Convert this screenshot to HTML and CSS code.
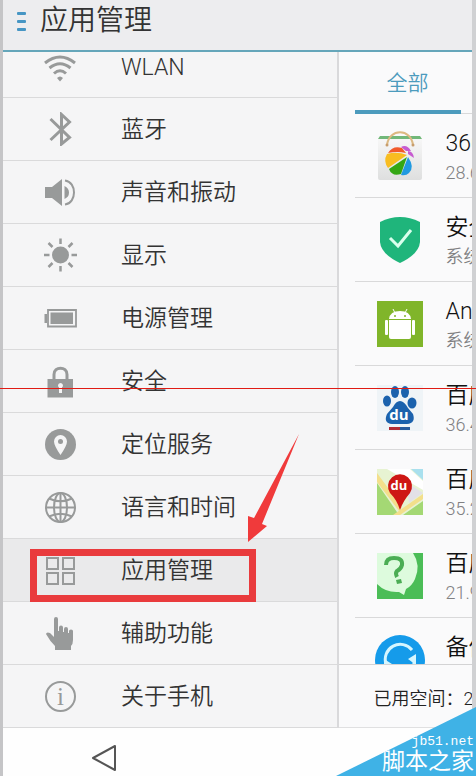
FILE: index.html
```html
<!DOCTYPE html>
<html lang="zh-CN">
<head>
    <meta charset="UTF-8">
    <meta name="viewport" content="width=device-width, initial-scale=1.0">
    <title>应用管理</title>
    <link rel="stylesheet" href="styles.css">
</head>
<body>
    <div class="screen">
        <header class="header">
            <button class="menu-btn" aria-label="菜单"><span></span><span></span><span></span></button>
            <h1>应用管理</h1>
        </header>
        <main class="main">
            <nav class="settings">
                <a class="item" href="#wlan">
                    <svg class="icon line" viewBox="0 0 34 34"><path stroke-width="3" d="M2 12Q17 0 32 12M6.500 17Q17 8.500 27.500 17M11 22.500Q17 17 23 22.500"/><path class="solid" d="M14 27Q17 24 20 27L17 30.500Z"/></svg>
                    <span>WLAN</span>
                </a>
                <a class="item" href="#bluetooth">
                    <svg class="icon line" viewBox="0 0 34 34"><path stroke-width="3" d="M7.500 7L26.500 25.500L18.500 32V2.500L26.500 10L7.500 28"/></svg>
                    <span>蓝牙</span>
                </a>
                <a class="item" href="#sound">
                    <svg class="icon line" viewBox="0 0 34 34"><path class="solid" d="M2 12H9L19 4V31L9 23H2ZM21.500 11Q26 13 26 17.500T21.500 24Z"/><path stroke-width="2" d="M22 5.500C34 7 34 28 22 29.500"/></svg>
                    <span>声音和振动</span>
                </a>
                <a class="item" href="#display">
                    <svg class="icon line" viewBox="0 0 34 34"><circle class="solid" cx="17.500" cy="17" r="8.500"/><path stroke-width="2.500" d="M17.500 .5V6M17.500 28V33.500M1 17H6.500M28.500 17H34M5.500 5L9.500 9M25.500 25L29.500 29M29.500 5L25.500 9M9.500 25L5.500 29"/></svg>
                    <span>显示</span>
                </a>
                <a class="item" href="#power">
                    <svg class="icon line" viewBox="0 0 34 34"><path stroke-width="1.800" d="M5 9H33V25.500H5Z"/><path class="solid" d="M7.500 11.500H30V23H7.500ZM1.500 13H4V22H1.500Z"/></svg>
                    <span>电源管理</span>
                </a>
                <a class="item" href="#security">
                    <svg class="icon line" viewBox="0 0 34 34"><path stroke-width="3" d="M11 16V10.500C11 2 24 2 24 10.500V16"/><path class="solid" d="M4.500 15H30V33.500H4.500Z"/><path class="hole" d="M17.500 19a2.500 2.500 0 0 1 1.500 4.500V29H16V23.500A2.500 2.500 0 0 1 17.500 19Z"/></svg>
                    <span>安全</span>
                </a>
                <a class="item" href="#location">
                    <svg class="icon" viewBox="0 0 34 34"><circle class="solid" cx="17.500" cy="17.500" r="15.500"/><path class="hole" d="M17.500 28Q11 18.500 11 14.500A6.500 6.500 0 0 1 24 14.500Q24 18.500 17.500 28Z"/><circle class="solid" cx="17.500" cy="14.500" r="2.500"/></svg>
                    <span>定位服务</span>
                </a>
                <a class="item" href="#language">
                    <svg class="icon line" viewBox="0 0 34 34"><g stroke-width="2"><circle cx="17.500" cy="17.500" r="14.500"/><ellipse cx="17.500" cy="17.500" rx="6.500" ry="14.500"/><path d="M17.500 3V32M3 17.500H32M6 8.500Q17.500 14 29 8.500M6 26.500Q17.500 21 29 26.500"/></g></svg>
                    <span>语言和时间</span>
                </a>
                <a class="item active" href="#apps" aria-current="page">
                    <svg class="icon line" viewBox="0 0 34 34"><path stroke-width="2" d="M4 5H15V16H4ZM20 5H31V16H20ZM4 20H15V31H4ZM20 20H31V31H20Z"/></svg>
                    <span>应用管理</span>
                    <svg class="arrow" viewBox="0 0 52 110"><path d="M51 1L14 91L19 93L0 109V83L6 85Z"/></svg>
                </a>
                <a class="item" href="#accessibility">
                    <svg class="icon" viewBox="0 0 34 34"><path class="solid" d="M11 21V3Q11 1 13 1T15 3V15H16V11.500Q16 9.500 18 9.500T20 11.500V16H21V13Q21 11 23 11T25 13V17H26V15Q26 13.500 28 13.500T30 15V24Q30 28 28 30V34H12V30L7.500 25L3 18Q3.500 15.500 7 17Z"/></svg>
                    <span>辅助功能</span>
                </a>
                <a class="item" href="#about">
                    <svg class="icon line" viewBox="0 0 34 34"><circle stroke-width="2" cx="17.500" cy="17.500" r="14.500"/><text class="info-i" x="17.500" y="26">i</text></svg>
                    <span>关于手机</span>
                </a>
            </nav>
            <section class="apps">
                <div class="tabs"><button class="tab">全部</button></div>
                <ul class="app-list">
                    <li class="app">
                        <svg class="app-icon" viewBox="0 0 50 50"><defs><linearGradient id="bag" x2="0" y2="1"><stop stop-color="#f8f8f8"/><stop offset="1" stop-color="#dedfdf"/></linearGradient></defs><rect x="3" y="6" width="44" height="43" rx="2" fill="url(#bag)"/><path fill="#72b879" d="M5 5H45L47 8H3Z"/><path fill="none" stroke="#dcb982" stroke-width="2" d="M12 14C14-3 36-3 38 14"/><circle cx="12" cy="14" r="1.500" fill="#c79d6c"/><circle cx="38" cy="14" r="1.500" fill="#c79d6c"/><path fill="#f15a2b" d="M13 22Q18 14 27 17L31 22Q22 20 13 22Z"/><path fill="#f8bd20" d="M12 23Q22 20 32 24L13 37Q8 30 12 23Z"/><path fill="#34a714" d="M32 26L26 43Q17 46 14 38Z"/><path fill="#209ae1" d="M33 26Q40 36 34 42Q31 45 26 44Z"/><path fill="#c75bd0" d="M26 16Q32 13 36 20L31 20ZM33 20Q38 20 39 27Q36 25 33 23Z"/></svg>
                        <div class="app-text"><h2>360</h2><p>28.6</p></div>
                    </li>
                    <li class="app">
                        <svg class="app-icon" viewBox="0 0 50 50"><path fill="#1fb57b" d="M5 7Q25-3 45 7V27Q44 39 25 48Q6 39 5 27Z"/><path fill="none" stroke="#d9ffed" stroke-width="3" d="M15 23L23 31L36 15"/></svg>
                        <div class="app-text"><h2>安全</h2><p>系统</p></div>
                    </li>
                    <li class="app">
                        <svg class="app-icon" viewBox="0 0 50 50"><path fill="#80b52a" d="M2 2H48V48H2Z"/><g fill="#fff"><path d="M14 20Q15 12 25 12T36 20Z"/><path d="M14 21H36V38Q36 40 34 40H16Q14 40 14 38Z"/><rect x="10" y="21" width="3" height="15" rx="1"/><rect x="37" y="21" width="3" height="15" rx="1"/></g><path stroke="#fff" d="M18 10L20 14M32 10L30 14"/><circle cx="20" cy="17" r="1" fill="#80b52a"/><circle cx="30" cy="17" r="1" fill="#80b52a"/></svg>
                        <div class="app-text"><h2>And</h2><p>系统</p></div>
                    </li>
                    <li class="app">
                        <svg class="app-icon" viewBox="0 0 50 50"><path fill="#eff4f7" d="M2 2H48V48H2Z"/><g fill="#1b62ad"><ellipse cx="20" cy="9" rx="4" ry="6"/><ellipse cx="30" cy="9" rx="4" ry="6"/><ellipse cx="12" cy="18" rx="4" ry="5.500"/><ellipse cx="37" cy="20" rx="4.500" ry="5.500"/><path d="M25 18Q29 18 33 25L38 31Q41 40 32 41H17Q8 40 12 31L18 24Q21 18 25 18Z"/></g><path fill="#b12c34" d="M14 44H25V47H14Z"/><path fill="#285c9d" d="M25 44H35V47H25Z"/><text class="du" x="24" y="37">du</text></svg>
                        <div class="app-text"><h2>百度</h2><p>36.4</p></div>
                    </li>
                    <li class="app">
                        <svg class="app-icon" viewBox="0 0 50 50"><path fill="#e7f3d2" d="M2 2H48V48H2Z"/><path fill="#a4d874" d="M2 16L24 48H2ZM28 48L48 34V48Z"/><path fill="#fff" d="M12 2H35L48 14V23Z"/><path fill="#a9e0ee" d="M36 2H48V13Z"/><path fill="#e3e1e8" d="M31 15L48 26L34 36Z"/><path fill="#f3df8b" d="M2 6L27 40L24 44L2 15ZM18 48L48 27V32L25 48Z"/><path fill="#ce1714" d="M25 43Q22 33 15 26A12 12 0 1 1 35 26Q28 34 25 43Z"/><text class="du small" x="24" y="23">du</text></svg>
                        <div class="app-text"><h2>百度</h2><p>35.2</p></div>
                    </li>
                    <li class="app">
                        <svg class="app-icon" viewBox="0 0 50 50"><path fill="#4bbd57" d="M2 2H48V48H2Z"/><path fill="#ddfbdd" d="M2 2H38Q46 14 40 28Q37 35 31 38L29 44L24 41Q11 42 2 33Z"/><path fill="none" stroke="#4bad54" stroke-width="4" d="M11 14Q11 7 19 7Q28 7 27 14Q26 18 22 20Q20 22 22 26"/><path fill="#4bad54" d="M21 29L26 28L27 32L22 33Z"/></svg>
                        <div class="app-text"><h2>百度</h2><p>21.9</p></div>
                    </li>
                    <li class="app">
                        <svg class="app-icon" viewBox="0 0 50 50"><circle cx="25" cy="25" r="25" fill="#159bea"/><path fill="none" stroke="#d5f6ff" stroke-width="3" d="M11 29A15 15 0 0 1 37 15M39 22A15 15 0 0 1 15 37"/><path fill="#d5f6ff" d="M33 24L41 19V30ZM9 24L17 29L9 33Z"/></svg>
                        <div class="app-text"><h2>备份</h2></div>
                    </li>
                </ul>
                <footer class="storage">已用空间：2</footer>
            </section>
        </main>
    </div>
    <div class="navbar">
        <button class="back-btn" aria-label="返回">
            <svg viewBox="0 0 26 28"><path d="M2 14L24 2V26Z"/></svg>
        </button>
    </div>
    <div class="red-line"></div>
    <div class="watermark">
        <span class="site">jb51.net</span>
        <span class="site-name">脚本之家</span>
    </div>
</body>
</html>
```

FILE: styles.css
```css
*, *::after {
    box-sizing: border-box;
}
body {
    margin: 0;
    min-height: 100vh;
    position: relative;
    overflow-x: hidden;
    display: flex;
    flex-direction: column;
    font-family: Roboto, "Noto Sans CJK SC", sans-serif;
    font-weight: 350;
    color: #333;
    background: #fefefe;
}
h1, h2, p, ul {
    margin: 0;
    padding: 0;
    font-weight: inherit;
}
button {
    padding: 0;
    border: none;
    background: none;
    font: inherit;
    cursor: pointer;
}
.screen {
    border-left: 3px solid #c5c5c7;
    border-right: 4px solid #d0d1d3;
}
.header {
    display: flex;
    align-items: center;
    gap: 14px;
    height: 52px;
    padding: 0 14px 8px;
    background: #ededef;
    border-bottom: 2px solid #65a6ba;
}
.header h1 {
    font-size: 28px;
    line-height: 40px;
}
.menu-btn {
    display: grid;
    gap: 5px;
}
.menu-btn span {
    width: 9px;
    height: 3px;
    border-radius: 1px;
    background: #4796c4;
}
.main {
    display: flex;
}

/* left column */
.settings {
    flex: 5;
    min-width: 0;
    background: #f5f5f6;
    border-right: 2px solid #d9d9db;
}
.item {
    position: relative;
    display: flex;
    align-items: center;
    gap: 44px;
    height: 63px;
    padding: 0 40px;
    border-bottom: 1px solid #dadadb;
    color: #333;
    font-size: 23px;
    text-decoration: none;
}
.item span {
    padding-bottom: 4px;
}
/* first row is half scrolled under the header */
.item:first-child {
    height: 46px;
    padding-bottom: 14px;
}
.item:first-child span {
    padding-bottom: 0;
}
.item.active {
    background: #eaeaeb;
}
.item.active::after {
    content: "";
    position: absolute;
    left: 27px;
    top: 10px;
    width: 226px;
    height: 53px;
    border: 7px solid #e93b3d;
}
.icon {
    flex: none;
    width: 34px;
    height: 34px;
}
.line {
    fill: none;
    stroke: #989a9a;
}
.solid {
    fill: #989a9a;
    stroke: none;
}
.hole {
    fill: #f5f5f6;
    stroke: none;
}
.info-i {
    fill: #989a9a;
    stroke: none;
    font: 25px "Liberation Serif", serif;
    text-anchor: middle;
}
.arrow {
    position: absolute;
    left: 245px;
    bottom: 58px;
    width: 52px;
    height: 110px;
    fill: #f03a3b;
}

/* right column */
.apps {
    flex: 2;
    min-width: 0;
    display: flex;
    flex-direction: column;
    overflow: hidden;
    background: #fafafb;
}
.tabs {
    height: 62px;
    margin-left: 16px;
    border-bottom: 1px solid #d9d9da;
}
.tab {
    width: 106px;
    height: 62px;
    border-bottom: 4px solid #4c9bbd;
    color: #4c9bbd;
    font-size: 21px;
}
.app-list {
    flex: 1;
    contain: size;
    overflow: hidden;
    list-style: none;
}
.app {
    display: flex;
    gap: 21px;
    height: 84px;
    margin-left: 16px;
    padding-left: 20px;
    border-bottom: 1px solid #d9d9da;
    white-space: nowrap;
}
.app-icon {
    flex: none;
    width: 50px;
    height: 50px;
    margin-top: 17px;
}
.app-text {
    padding-top: 14px;
}
.app h2 {
    color: #111;
    font-size: 23px;
    line-height: 32px;
}
.app p {
    color: #808082;
    font-size: 18px;
    line-height: 26px;
}
.du {
    fill: #fff;
    font: bold 15px "Open Sans", sans-serif;
    text-anchor: middle;
}
.du.small {
    font-size: 13px;
}
.storage {
    height: 64px;
    padding: 0 35px;
    border-top: 1px solid #d3d3d4;
    border-bottom: 1px solid #e0e0e1;
    color: #222;
    font-size: 18px;
    line-height: 68px;
    white-space: nowrap;
}

/* bottom bar */
.navbar {
    flex: 1;
    min-height: 48px;
    padding: 16px 88px 0;
    border-left: 3px solid #c5c5c7;
}
.back-btn svg {
    display: block;
    width: 26px;
    height: 28px;
    fill: none;
    stroke: #555;
    stroke-width: 2;
    stroke-linejoin: round;
}
.red-line {
    position: absolute;
    top: 50%;
    left: 0;
    right: 0;
    height: 1px;
    background: #e01b14;
}
.watermark {
    position: absolute;
    right: 0;
    bottom: 0;
    width: 140px;
    height: 69px;
    padding: 27px 2px 0 0;
    display: flex;
    flex-direction: column;
    align-items: flex-end;
    background: #3fb2e6;
    clip-path: polygon(100% 0, 100% 100%, 0 100%);
    color: #fff;
    white-space: nowrap;
}
.site {
    font: 13px/16px "Liberation Mono", monospace;
}
.site-name {
    font-size: 23px;
    font-weight: 400;
    line-height: 24px;
}
```
